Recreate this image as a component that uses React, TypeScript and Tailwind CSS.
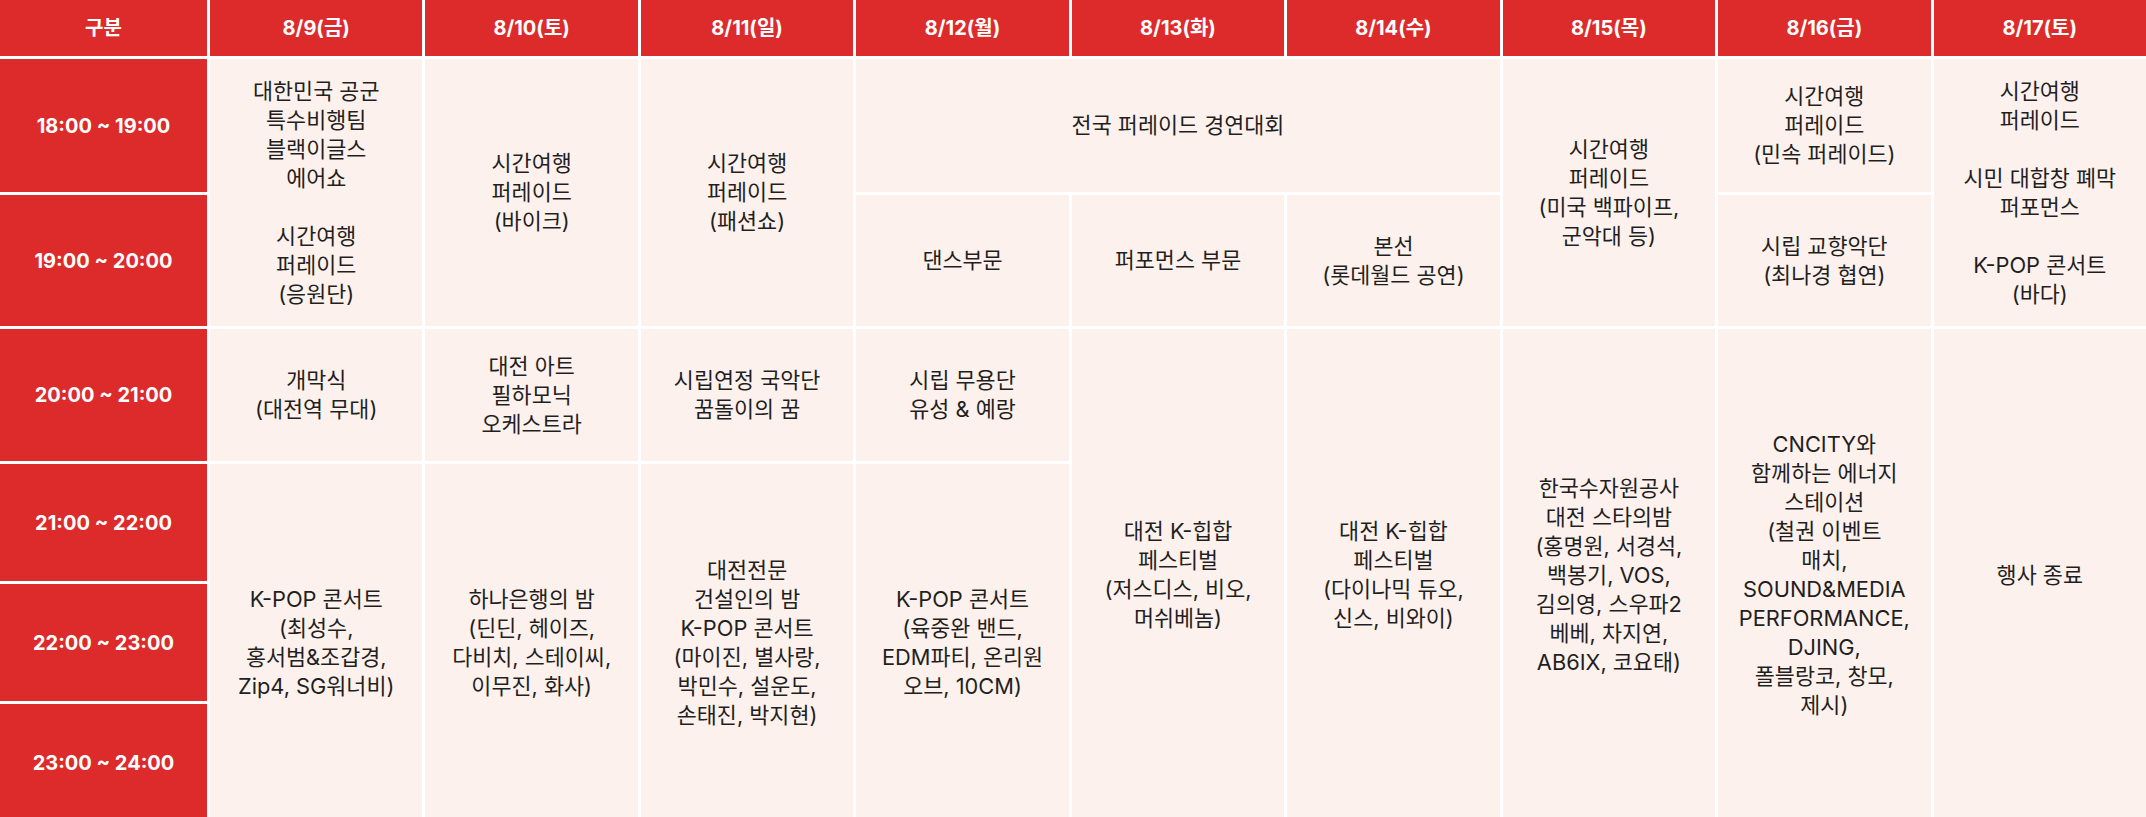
import { Fragment } from "react";

interface Cell {
  pos: string;
  lines: string[];
}

const days = [
  "8/9(금)",
  "8/10(토)",
  "8/11(일)",
  "8/12(월)",
  "8/13(화)",
  "8/14(수)",
  "8/15(목)",
  "8/16(금)",
  "8/17(토)",
];

const times = [
  { pos: "col-start-1 row-start-2", label: "18:00 ~ 19:00" },
  { pos: "col-start-1 row-start-3", label: "19:00 ~ 20:00" },
  { pos: "col-start-1 row-start-4", label: "20:00 ~ 21:00" },
  { pos: "col-start-1 row-start-5", label: "21:00 ~ 22:00" },
  { pos: "col-start-1 row-start-6", label: "22:00 ~ 23:00" },
  { pos: "col-start-1 row-start-7", label: "23:00 ~ 24:00" },
];

// each program block, placed on the grid by hand like a table with rowspan/colspan
const cells: Cell[] = [
  {
    pos: "col-start-2 row-start-2 row-span-2",
    lines: ["대한민국 공군", "특수비행팀", "블랙이글스", "에어쇼", "", "시간여행", "퍼레이드", "(응원단)"],
  },
  { pos: "col-start-3 row-start-2 row-span-2", lines: ["시간여행", "퍼레이드", "(바이크)"] },
  { pos: "col-start-4 row-start-2 row-span-2", lines: ["시간여행", "퍼레이드", "(패션쇼)"] },
  { pos: "col-start-5 row-start-2 col-span-3", lines: ["전국 퍼레이드 경연대회"] },
  {
    pos: "col-start-8 row-start-2 row-span-2",
    lines: ["시간여행", "퍼레이드", "(미국 백파이프,", "군악대 등)"],
  },
  { pos: "col-start-9 row-start-2", lines: ["시간여행", "퍼레이드", "(민속 퍼레이드)"] },
  {
    pos: "col-start-10 row-start-2 row-span-2",
    lines: ["시간여행", "퍼레이드", "", "시민 대합창 폐막", "퍼포먼스", "", "K-POP 콘서트", "(바다)"],
  },
  { pos: "col-start-5 row-start-3", lines: ["댄스부문"] },
  { pos: "col-start-6 row-start-3", lines: ["퍼포먼스 부문"] },
  { pos: "col-start-7 row-start-3", lines: ["본선", "(롯데월드 공연)"] },
  { pos: "col-start-9 row-start-3", lines: ["시립 교향악단", "(최나경 협연)"] },

  { pos: "col-start-2 row-start-4", lines: ["개막식", "(대전역 무대)"] },
  { pos: "col-start-3 row-start-4", lines: ["대전 아트", "필하모닉", "오케스트라"] },
  { pos: "col-start-4 row-start-4", lines: ["시립연정 국악단", "꿈돌이의 꿈"] },
  { pos: "col-start-5 row-start-4", lines: ["시립 무용단", "유성 & 예랑"] },
  {
    pos: "col-start-6 row-start-4 row-span-4",
    lines: ["대전 K-힙합", "페스티벌", "(저스디스, 비오,", "머쉬베놈)"],
  },
  {
    pos: "col-start-7 row-start-4 row-span-4",
    lines: ["대전 K-힙합", "페스티벌", "(다이나믹 듀오,", "신스, 비와이)"],
  },
  {
    pos: "col-start-8 row-start-4 row-span-4",
    lines: [
      "한국수자원공사",
      "대전 스타의밤",
      "(홍명원, 서경석,",
      "백봉기, VOS,",
      "김의영, 스우파2",
      "베베, 차지연,",
      "AB6IX, 코요태)",
    ],
  },
  {
    pos: "col-start-9 row-start-4 row-span-4",
    lines: [
      "CNCITY와",
      "함께하는 에너지",
      "스테이션",
      "(철권 이벤트",
      "매치,",
      "SOUND&MEDIA",
      "PERFORMANCE,",
      "DJING,",
      "폴블랑코, 창모,",
      "제시)",
    ],
  },
  { pos: "col-start-10 row-start-4 row-span-4", lines: ["행사 종료"] },

  {
    pos: "col-start-2 row-start-5 row-span-3",
    lines: ["K-POP 콘서트", "(최성수,", "홍서범&조갑경,", "Zip4, SG워너비)"],
  },
  {
    pos: "col-start-3 row-start-5 row-span-3",
    lines: ["하나은행의 밤", "(딘딘, 헤이즈,", "다비치, 스테이씨,", "이무진, 화사)"],
  },
  {
    pos: "col-start-4 row-start-5 row-span-3",
    lines: ["대전전문", "건설인의 밤", "K-POP 콘서트", "(마이진, 별사랑,", "박민수, 설운도,", "손태진, 박지현)"],
  },
  {
    pos: "col-start-5 row-start-5 row-span-3",
    lines: ["K-POP 콘서트", "(육중완 밴드,", "EDM파티, 온리원", "오브, 10CM)"],
  },
];

export default function App() {
  return (
    <div className="w-full bg-white font-['Inter','Noto_Sans_CJK_KR',sans-serif]">
      <div className="grid grid-cols-[207px_repeat(9,minmax(0,1fr))] grid-rows-[56px_133px_131px_132px_117px_117px_117px] gap-[3px]">
        <div className="col-start-1 row-start-1 flex items-center justify-center bg-[#dd2b2b] text-[20px] font-bold text-white">
          구분
        </div>
        {days.map((d) => (
          <div
            key={d}
            className="row-start-1 flex items-center justify-center bg-[#dd2b2b] text-[20px] font-bold text-white"
          >
            {d}
          </div>
        ))}

        {times.map((t) => (
          <div
            key={t.label}
            className={`${t.pos} flex items-center justify-center bg-[#dd2b2b] text-[20px] font-bold text-white`}
          >
            {t.label}
          </div>
        ))}

        {cells.map((c, i) => (
          <div
            key={i}
            className={`${c.pos} flex items-center justify-center bg-[#fdf1ed] px-1 text-center`}
          >
            <p className="whitespace-nowrap text-[21.8px] leading-[29px] text-[#1f1f1f]">
              {c.lines.map((line, j) => (
                <Fragment key={j}>
                  {j > 0 && <br />}
                  {line}
                </Fragment>
              ))}
            </p>
          </div>
        ))}
      </div>
    </div>
  );
}
